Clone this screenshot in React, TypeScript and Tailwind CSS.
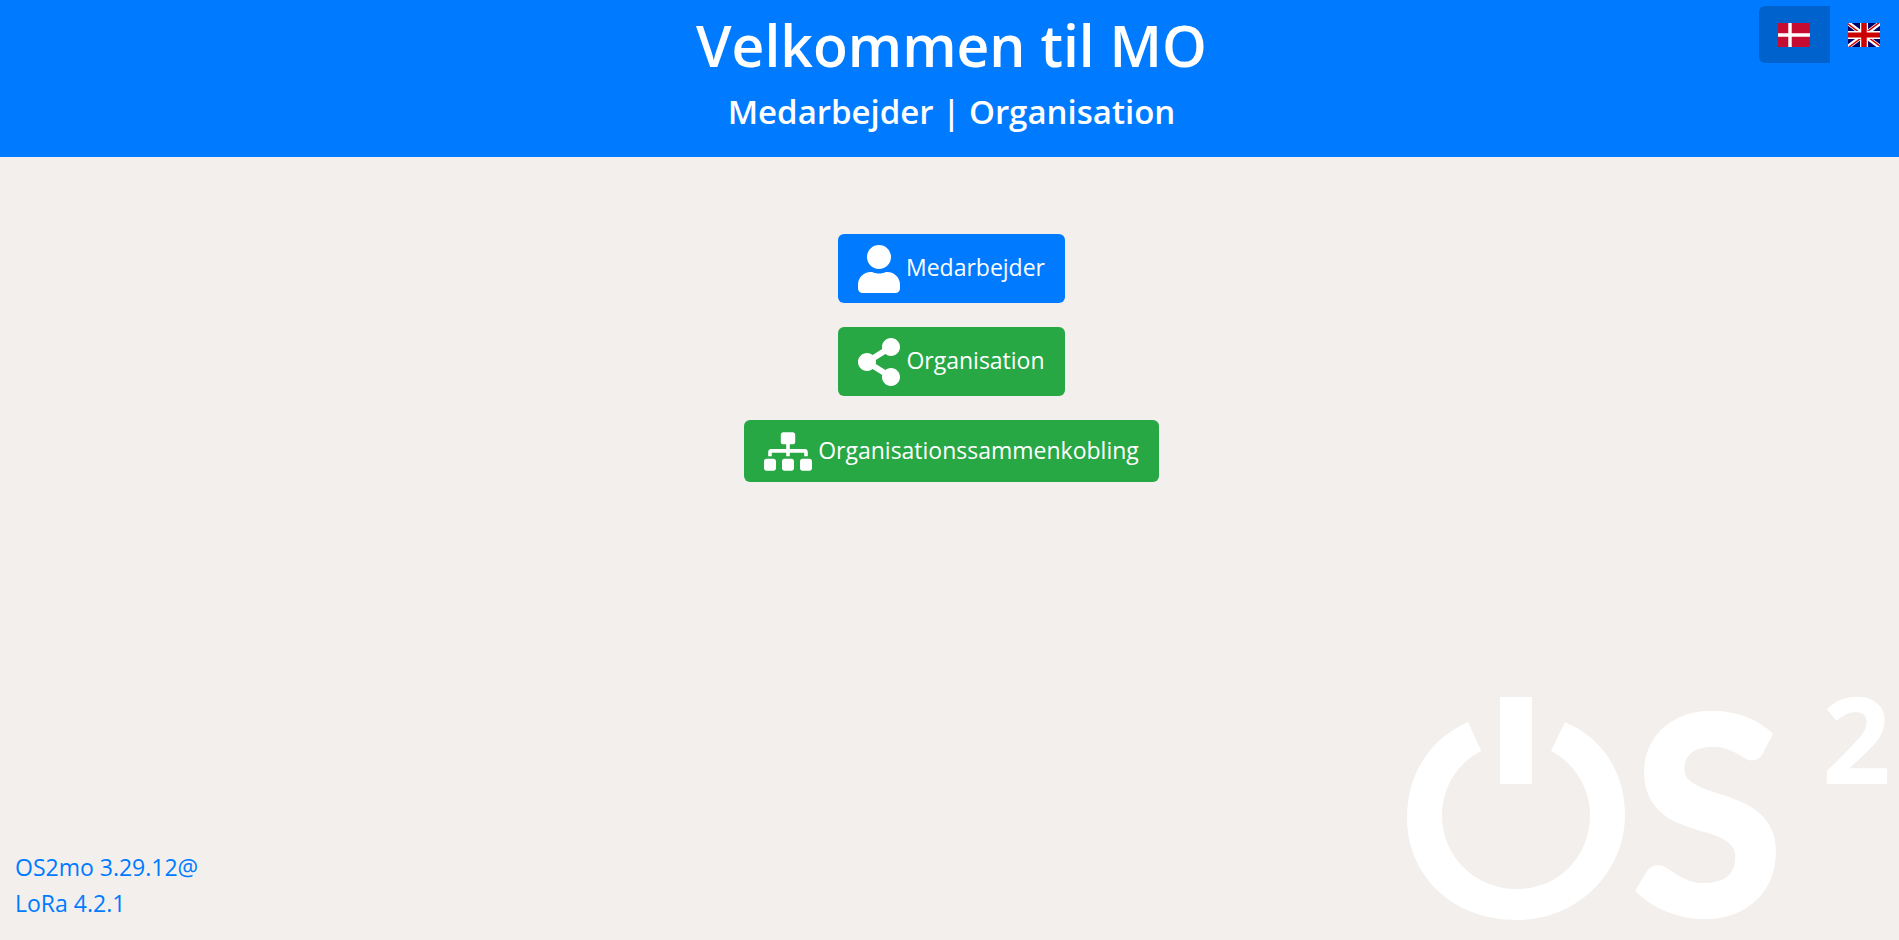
import { FaShareAlt, FaSitemap, FaUser } from 'react-icons/fa'

function DanishFlag() {
  return (
    <svg viewBox="0 0 640 480" className="h-6 w-8" aria-hidden="true">
      <path fill="#c60c30" d="M0 0h640v480H0z" />
      <path fill="#fff" d="M205.700 0h68.600v480h-68.600zM0 205.700h640v68.600H0z" />
    </svg>
  )
}

function BritishFlag() {
  return (
    <svg viewBox="0 0 640 480" className="h-6 w-8" aria-hidden="true">
      <path fill="#006" d="M0 0h640v480H0z" />
      <path fill="#fff" d="M0 0v54l568 426h72v-54L72 0zM640 0v54L72 480H0v-54L568 0z" />
      <path fill="#fff" d="M241 0v480h160V0H241zM0 160v160h640V160H0z" />
      <path fill="#c00" d="M0 192v96h640v-96H0zM265 0v480h110V0H265z" />
      <path fill="#c00" d="M0 480l213-160h48L48 480zM0 0l213 160h-48L0 36zM379 160L592 0h48L427 160zM640 480L427 320h48l165 124z" />
    </svg>
  )
}

function Os2Logo() {
  return (
    <svg viewBox="0 0 1527 780" className="h-[260px] w-[509px] overflow-visible" fill="#fff" role="img" aria-label="OS2">
      <path d="M234 126C115 180 51 285 51 415C51 580 180 720 380 720C570 720 705 570 705 405C705 280 640 175 525 126L483 213C555 250 600 325 600 405C600 530 505 627 380 627C255 627 156 530 156 405C156 325 200 250 274 213Z" />
      <path d="M330 51h96v261h-96z" />
      <text x="728" y="702" fontSize="822" fontWeight="700" fontFamily="Lato, sans-serif" stroke="#fff" strokeWidth="18">S</text>
      <text x="1296" y="312" fontSize="362" fontWeight="700" fontFamily="'Open Sans', sans-serif">2</text>
    </svg>
  )
}

const action =
  'flex cursor-pointer items-center gap-1.5 rounded-md px-5 pt-[11px] pb-[10px] text-white'

export default function App() {
  return (
    <div className="flex min-h-screen flex-col bg-[#f2efec] font-['Open_Sans','Noto_Sans',sans-serif] text-[23px] leading-9">
      <header className="relative bg-[#007bff] pt-[9px] pb-[22px] pl-1 text-center font-semibold text-white">
        <h1 className="text-[57px] leading-[72px]">Velkommen til MO</h1>
        <h2 className="mt-2 text-[33px] leading-[46px]">Medarbejder | Organisation</h2>
        <div className="absolute top-[6px] right-0 flex" role="group" aria-label="Sprog">
          <button type="button" aria-label="Dansk" aria-pressed="true" className="flex h-[57px] cursor-pointer items-center rounded-l-md bg-[#0062cc] pr-5 pl-[19px]">
            <DanishFlag />
          </button>
          <button type="button" aria-label="English" aria-pressed="false" className="flex h-[57px] cursor-pointer items-center bg-[#007bff] pr-[19px] pl-[18px]">
            <BritishFlag />
          </button>
        </div>
      </header>

      <main className="flex flex-1 flex-col items-center gap-6 pt-[77px] pl-1">
        <button type="button" className={`${action} bg-[#007bff]`}>
          <FaUser className="h-12 w-[42px]" />
          <span className="pb-1">Medarbejder</span>
        </button>
        <button type="button" className={`${action} bg-[#28a745]`}>
          <FaShareAlt className="h-12 w-[42px]" />
          <span className="pb-1">Organisation</span>
        </button>
        <button type="button" className={`${action} bg-[#28a745]`}>
          <FaSitemap className="h-[41px] w-12" />
          <span className="pb-1">Organisationssammenkobling</span>
        </button>
      </main>

      <footer className="flex items-end justify-between">
        <div className="flex flex-col items-start pb-[19px] pl-[15px] text-[#007bff]">
          <a href="#os2mo">OS2mo 3.29.12@</a>
          <a href="#lora">LoRa 4.2.1</a>
        </div>
        <Os2Logo />
      </footer>
    </div>
  )
}
